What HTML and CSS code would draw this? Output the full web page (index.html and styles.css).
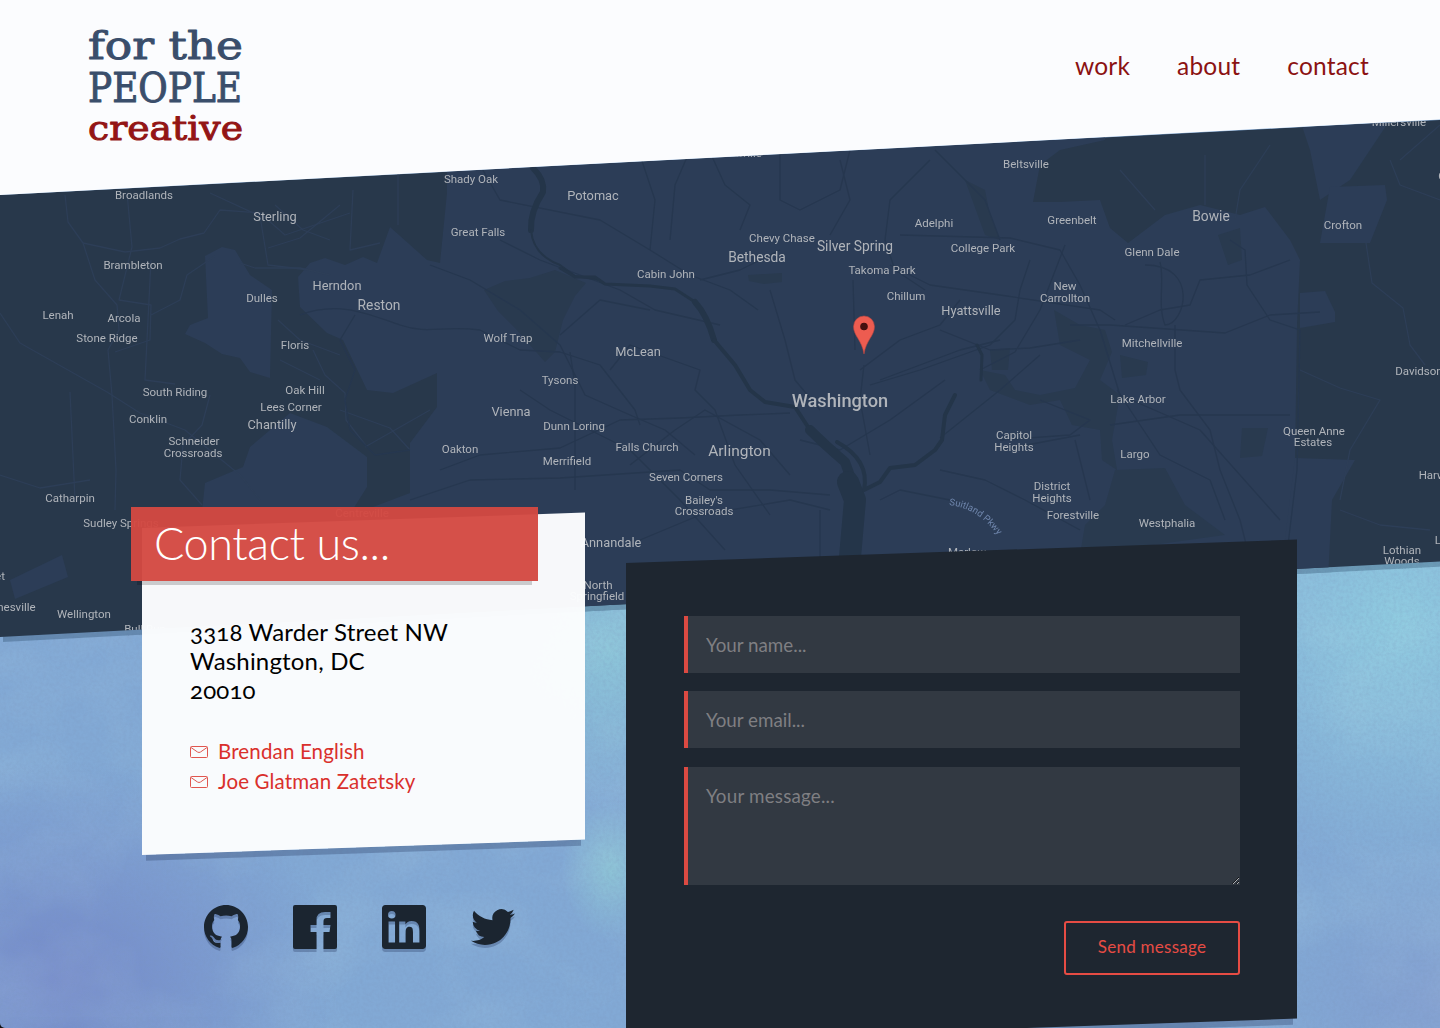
FILE: index.html
```html
<!DOCTYPE html>
<html lang="en">
<head>
<meta charset="utf-8">
<title>Contact | For the People Creative</title>
<link rel="stylesheet" href="styles.css">
</head>
<body>
<div class="page">
  <svg class="paint" viewBox="0 0 1440 478" preserveAspectRatio="none" aria-hidden="true">
    <filter id="wash" x="0" y="0" width="100%" height="100%">
      <feTurbulence type="fractalNoise" baseFrequency="0.008 0.01" numOctaves="4" seed="8"/>
      <feColorMatrix values="0 0 0 0 .55  0 0 0 0 .8  0 0 0 0 .86  1.5 0 0 0 -.6"/>
    </filter>
    <filter id="grain" x="0" y="0" width="100%" height="100%">
      <feTurbulence type="fractalNoise" baseFrequency="0.3" numOctaves="3" seed="3"/>
      <feColorMatrix values="0 0 0 0 .2  0 0 0 0 .3  0 0 0 0 .5  .9 0 0 0 -.3"/>
    </filter>
    <rect width="1440" height="478" filter="url(#wash)" opacity=".22"/>
    <rect width="1440" height="478" filter="url(#grain)" opacity=".45"/>
  </svg>

  <header class="header">
    <a class="logo" href="#" aria-label="for the people creative">
      <svg width="160" height="120" viewBox="0 0 160 120">
        <text class="logo-blue" x="1" y="34" font-size="40" textLength="155" lengthAdjust="spacingAndGlyphs">for the</text>
        <text class="logo-blue" x="1" y="77" font-size="41" textLength="154" lengthAdjust="spacingAndGlyphs">PEOPLE</text>
        <text class="logo-red" x="1" y="115" font-size="34" textLength="155" lengthAdjust="spacingAndGlyphs">creative</text>
      </svg>
    </a>
    <nav class="nav">
      <a href="#">work</a>
      <a href="#">about</a>
      <a href="#">contact</a>
    </nav>
  </header>

  <section class="map-wrap">
    <svg class="map" viewBox="0 120 1440 517" width="1440" height="517">
      <rect class="land" y="120" width="1440" height="517"/>
      <g class="urban">
        <path d="M447 120L447 193L440 263L427 260L390 227L377 263L363 257L345 265L325 258L310 263L298 277L300 307L327 333L343 340L367 390L393 393L437 373L437 407L410 443L410 493L365 510L340 560L340 637H1280L1296 500L1295 460L1297 325L1300 260L1290 240L1265 207L1240 215L1200 205L1165 215L1128 243L1110 228L1100 200L1060 202L1033 202L1040 165L1060 150L1105 140V120Z"/>
        <path d="M205 256L222 247L235 250L250 275L272 290L270 378L250 372L240 358L222 354L205 343L185 334L190 325L208 318Z"/>
        <path d="M250 447L290 413L327 427L367 457L367 487L340 530H200L205 483L243 467Z"/>
        <path d="M1300 120H1390L1350 180L1320 200L1310 150Z"/>
        <path d="M1330 187L1385 185L1387 200L1370 243H1320Z"/>
        <path d="M1300 293L1325 291L1335 312V322L1300 328Z"/>
        <path d="M1295 458L1355 460L1332 500L1328 580H1280Z"/>
        <path d="M10 580L62 555L68 577L15 599Z"/>
      </g>
      <g class="park">
        <path d="M484 290L505 281L530 278L555 270L586 283L575 296L563 320L555 352L545 362L530 345L515 328L498 311Z"/>
        <path d="M748 275L782 273V282L764 284L749 281Z"/>
        <path d="M1054 310L1080 325L1105 330L1112 352L1100 380L1120 395L1112 440L1117 470L1102 460L1100 430L1072 425L1060 400L1030 405L990 390L980 370L1005 375L1015 390L1040 395L1075 388L1090 360L1060 345Z"/>
        <path d="M965 180L985 190L990 215L1000 240L985 235Z"/>
        <path d="M1120 355L1148 362L1146 375L1122 378Z"/>
        <path d="M1242 428H1268L1262 456L1240 458Z"/>
        <path d="M1218 235L1240 228L1242 260L1228 265Z"/>
        <path d="M1115 470L1165 468L1185 505L1225 535L1080 555L1085 525L1105 505Z"/>
        <path d="M990 350L1010 348L1008 370L992 370Z"/>
      </g>
      <g class="roads-light">
        <path d="M65 195L68 222L83 243L95 280L117 305L119 330L108 350L112 395L116 470L115 510"/>
        <path d="M83 243L125 252L160 248L180 239L204 233L220 210L260 213L285 235L350 213"/>
        <path d="M127 193L132 247L119 300L151 305L150 340L115 352"/>
        <path d="M151 260L147 340L145 380L175 384"/>
        <path d="M151 315L180 300L187 275L215 256"/>
        <path d="M0 313L20 343L107 392L140 413L185 430L240 475L260 500"/>
        <path d="M70 392L75 500M202 505L180 480L183 445L202 425L210 395"/>
        <path d="M0 475L40 488L90 480"/>
        <path d="M210 193L260 216L268 265L310 270"/>
        <path d="M268 248L300 238L340 205M275 205L303 230L330 240"/>
        <path d="M353 190L350 250L380 243M398 170V225"/>
        <path d="M240 263L255 268L300 268L330 275"/>
        <path d="M340 410L390 428L410 450M365 447L430 410"/>
        <path d="M313 350L325 375L345 393L346 420L367 447"/>
        <path d="M1366 243L1372 283L1403 308L1410 345L1425 365M1300 370L1340 388L1380 400L1350 450L1340 500"/>
        <path d="M1340 510L1380 525L1430 530M1120 170L1155 210M1205 155V205M1270 145L1240 190L1235 220"/>
        <path d="M1390 160L1400 185L1440 200M1400 160L1440 125"/>
        <path d="M278 320L300 340L340 355M280 360L320 380"/>
      </g>
      <g class="roads-dark">
        <path d="M300 315C340 300 370 315 400 325S440 325 480 330L520 350L560 352L600 365L635 410L640 425"/>
        <path d="M355 315L340 340L355 370L345 400L350 430L375 455L410 450"/>
        <path d="M430 265L470 280L520 310L560 345L585 395L630 415L665 430L695 455"/>
        <path d="M440 470L480 455L560 448L620 420L680 418L740 415L790 413"/>
        <path d="M410 500L470 480L560 478L680 470L710 490L770 490L830 495"/>
        <path d="M500 240L540 260L620 290L655 310L720 325"/>
        <path d="M480 165L500 200L600 220L650 250L690 275L730 290L758 310"/>
        <path d="M640 155L655 200L650 250M690 150L675 185L670 240M710 152L725 185L750 205L740 230"/>
        <path d="M780 150L780 200L800 210L840 190L850 150M840 160L850 200L830 235"/>
        <path d="M930 160L890 200L885 240L895 270L925 290M935 150L985 200L1000 240"/>
        <path d="M770 290L785 340L795 380L820 410M853 280L855 350M880 380L960 350L1000 340"/>
        <path d="M860 370L900 340L940 325L960 300M864 365L860 400L870 455"/>
        <path d="M870 385L920 370L990 345L1015 320L1020 290L1030 260"/>
        <path d="M890 265L930 285L1000 295L1100 310L1115 320"/>
        <path d="M900 235L1010 238L1060 250L1080 285L1100 330L1120 395L1200 430L1280 520"/>
        <path d="M1125 325L1160 310L1190 305L1200 280L1250 275L1290 260"/>
        <path d="M1070 325L1110 325L1225 333L1270 315L1320 312"/>
        <path d="M1145 265C1200 265 1185 325 1165 325C1157 305 1165 280 1160 262"/>
        <path d="M1230 240L1245 250L1247 285L1270 320L1300 330L1297 470L1285 570"/>
        <path d="M1175 325V370L1180 390L1210 430L1220 470L1240 520L1250 560"/>
        <path d="M1110 425L1180 415L1290 415M1117 390L1160 455L1210 480L1225 520"/>
        <path d="M940 330L990 350L1030 348L1080 340M980 370L1015 352L1040 310L1065 245"/>
        <path d="M940 438L1000 390L1040 355M940 470L985 480L1025 500L1080 530"/>
        <path d="M570 352L575 385L575 490M610 370L630 345L700 370L695 390L715 410L735 465L770 515"/>
        <path d="M520 390L550 410L630 450L680 500L725 550M630 465L675 430L705 410L760 440L790 475"/>
        <path d="M700 280L740 270L780 250M800 440L840 450L890 420L945 380M650 310L600 300L560 335"/>
        <path d="M640 540L700 515L790 500L830 510M820 510L820 560M880 500L900 490L950 500"/>
        <path d="M1040 400L1090 420L1070 435L1000 440M1000 450L1080 435M1075 440L1090 500"/>
      </g>
      <g class="water">
        <path stroke-width="6" d="M533 168Q545 180 543 192Q530 212 531 230"/>
        <path stroke-width="2" d="M531 230Q533 255 560 265L575 276L600 280"/>
        <path stroke-width="3" d="M560 268L575 277L595 277L605 284L650 286L675 289L695 302"/>
        <path stroke-width="6" d="M695 302Q707 315 714 340"/>
        <path stroke-width="4" d="M714 340L735 365L750 390L765 402L795 407L810 430"/>
        <path stroke-width="10" d="M810 430Q825 445 845 462L855 490L850 530L848 570"/>
        <path stroke-width="22" d="M848 482L855 500L848 580"/>
        <path stroke-width="4" d="M837 442Q870 460 864 490L880 482L890 468L915 465L935 450L942 440L945 415L955 395"/>
        <path stroke-width="3" d="M977 345L982 355L981 380"/>
      </g>
      <g class="label">
        <text x="144" y="199">Broadlands</text><text x="133" y="269">Brambleton</text><text x="58" y="319">Lenah</text>
        <text x="124" y="322">Arcola</text><text x="107" y="342">Stone Ridge</text><text x="262" y="302">Dulles</text>
        <text x="295" y="349">Floris</text><text x="175" y="396">South Riding</text><text x="148" y="423">Conklin</text>
        <text x="194" y="445">Schneider</text><text x="193" y="457">Crossroads</text><text x="305" y="394">Oak Hill</text>
        <text x="291" y="411">Lees Corner</text><text x="70" y="502">Catharpin</text><text x="121" y="527">Sudley Springs</text>
        <text x="84" y="618">Wellington</text><text x="0" y="580">et</text><text x="8" y="611">Gainesville</text><text x="145" y="633">Bull Run</text>
        <text x="471" y="183">Shady Oak</text><text x="478" y="236">Great Falls</text><text x="508" y="342">Wolf Trap</text>
        <text x="560" y="384">Tysons</text><text x="574" y="430">Dunn Loring</text><text x="567" y="465">Merrifield</text>
        <text x="460" y="453">Oakton</text><text x="666" y="278">Cabin John</text><text x="782" y="242">Chevy Chase</text>
        <text x="647" y="451">Falls Church</text><text x="686" y="481">Seven Corners</text><text x="704" y="504">Bailey's</text>
        <text x="704" y="515">Crossroads</text><text x="598" y="589">North</text><text x="597" y="600">Springfield</text>
        <text x="934" y="227">Adelphi</text><text x="983" y="252">College Park</text><text x="882" y="274">Takoma Park</text>
        <text x="906" y="300">Chillum</text><text x="1026" y="168">Beltsville</text><text x="1072" y="224">Greenbelt</text>
        <text x="1152" y="256">Glenn Dale</text><text x="1065" y="290">New</text><text x="1065" y="302">Carrollton</text>
        <text x="1152" y="347">Mitchellville</text><text x="1138" y="403">Lake Arbor</text><text x="1135" y="458">Largo</text>
        <text x="1014" y="439">Capitol</text><text x="1014" y="451">Heights</text><text x="1052" y="490">District</text>
        <text x="1052" y="502">Heights</text><text x="1073" y="519">Forestville</text><text x="1167" y="527">Westphalia</text>
        <text x="1343" y="229">Crofton</text><text x="1399" y="126">Millersville</text><text x="1314" y="435">Queen Anne</text>
        <text x="1313" y="446">Estates</text><text x="1429" y="375">Davidsonville</text><text x="1442" y="479">Harwood</text>
        <text x="1402" y="554">Lothian</text><text x="1402" y="565">Woods</text><text x="1447" y="544">Lake</text>
        <text x="967" y="556">Marlow</text><text x="362" y="517">Centreville</text><text x="1460" y="180">Odenton</text><text x="739" y="157">Rockville</text>
      </g>
      <g class="label label-town">
        <text x="275" y="221">Sterling</text><text x="337" y="290">Herndon</text><text x="272" y="429">Chantilly</text>
        <text x="593" y="200">Potomac</text><text x="638" y="356">McLean</text><text x="511" y="416">Vienna</text>
        <text x="971" y="315">Hyattsville</text><text x="611" y="547">Annandale</text>
      </g>
      <g class="label label-mid">
        <text x="379" y="310">Reston</text><text x="757" y="262">Bethesda</text><text x="855" y="251">Silver Spring</text><text x="1211" y="221">Bowie</text>
      </g>
      <text class="label label-large" x="739.500" y="456">Arlington</text>
      <text class="label label-city" x="840" y="407">Washington</text>
      <path id="pkwy" d="M949 505Q978 508 999 537" fill="none"/>
      <text class="label-road"><textPath href="#pkwy">Suitland Pkwy</textPath></text>
      <path d="M864 354C862 340 853.500 336 853.500 326.500A10.500 10.500 0 0 1 874.500 326.500C874.500 336 866 340 864 354Z" fill="#ed5c50" stroke="#b94742" stroke-width=".6"/>
      <circle cx="864" cy="326.500" r="3.800" fill="#44100f"/>
    </svg>
  </section>

  <main class="main">
    <section class="contact">
      <h1 class="title">Contact us...</h1>
      <address class="address">3318 Warder Street NW<br>Washington, DC<br>20010</address>
      <ul class="people">
        <li><svg width="18" height="12" viewBox="0 0 18 12"><path d="M.5 1.500Q.5.500 1.500.500H16.500Q17.500.500 17.500 1.500V10.500Q17.500 11.500 16.500 11.500H1.500Q.5 11.500.500 10.500ZM1 1.500L7.500 6Q9 7 10.500 6L17 1.500"/></svg><a href="#">Brendan English</a></li>
        <li><svg width="18" height="12" viewBox="0 0 18 12"><path d="M.5 1.500Q.5.500 1.500.500H16.500Q17.500.500 17.500 1.500V10.500Q17.500 11.500 16.500 11.500H1.500Q.5 11.500.500 10.500ZM1 1.500L7.500 6Q9 7 10.500 6L17 1.500"/></svg><a href="#">Joe Glatman Zatetsky</a></li>
      </ul>
      <div class="social">
        <a href="#" aria-label="GitHub"><svg width="44" height="44" viewBox="0 0 16 16"><path d="M8 0C3.580 0 0 3.580 0 8c0 3.540 2.290 6.530 5.470 7.590.4.070.55-.17.55-.38 0-.19-.01-.82-.01-1.490-2.010.37-2.530-.49-2.690-.94-.09-.23-.48-.94-.82-1.130-.28-.15-.68-.52-.01-.53.63-.01 1.080.58 1.230.82.72 1.210 1.870.87 2.330.66.07-.52.28-.87.51-1.070-1.780-.2-3.640-.89-3.640-3.950 0-.87.31-1.590.82-2.150-.08-.2-.36-1.020.08-2.120 0 0 .67-.21 2.200.82.64-.18 1.320-.27 2-.27s1.360.09 2 .27c1.530-1.040 2.200-.82 2.200-.82.44 1.100.16 1.920.08 2.120.51.56.82 1.270.82 2.150 0 3.070-1.870 3.750-3.650 3.950.29.25.54.73.54 1.480 0 1.070-.01 1.930-.01 2.200 0 .21.15.46.55.38A8.010 8.010 0 0 0 16 8c0-4.420-3.580-8-8-8z"/></svg></a>
        <a href="#" aria-label="Facebook"><svg width="44" height="44" viewBox="0 0 44 44"><path d="M2 0H42Q44 0 44 2V42Q44 44 42 44H30.500V27H36.500L37.500 20H30.500V16Q30.500 13 34 13H37.500V7H32Q23.500 7 23.500 15V20H17.500V27H23.500V44H2Q0 44 0 42V2Q0 0 2 0Z"/></svg></a>
        <a href="#" aria-label="LinkedIn"><svg width="44" height="44" viewBox="0 0 24 24"><path d="M22.220 0H1.770C.79 0 0 .77 0 1.730v20.540C0 23.230.79 24 1.770 24h20.450c.98 0 1.780-.77 1.780-1.730V1.730C24 .77 23.200 0 22.220 0zM7.120 20.450H3.560V9h3.560v11.450zM5.340 7.430a2.060 2.060 0 1 1 0-4.130 2.060 2.060 0 0 1 0 4.130zM20.450 20.450h-3.560v-5.570c0-1.330-.02-3.040-1.850-3.040-1.850 0-2.140 1.450-2.140 2.940v5.670H9.350V9h3.410v1.560h.05c.48-.9 1.640-1.850 3.370-1.850 3.600 0 4.270 2.370 4.270 5.460v6.280z"/></svg></a>
        <a href="#" aria-label="Twitter"><svg width="44" height="44" viewBox="0 0 24 24"><path d="M23.953 4.570a10 10 0 0 1-2.825.775 4.958 4.958 0 0 0 2.163-2.723c-.951.555-2.005.959-3.127 1.184a4.920 4.920 0 0 0-8.384 4.482C7.690 8.095 4.067 6.130 1.640 3.162a4.822 4.822 0 0 0-.666 2.475c0 1.710.87 3.213 2.188 4.096a4.904 4.904 0 0 1-2.228-.616v.06a4.923 4.923 0 0 0 3.946 4.827 4.996 4.996 0 0 1-2.212.085 4.936 4.936 0 0 0 4.604 3.417 9.867 9.867 0 0 1-6.102 2.105c-.39 0-.779-.023-1.170-.067a13.995 13.995 0 0 0 7.557 2.209c9.053 0 13.998-7.496 13.998-13.985 0-.21 0-.42-.015-.63A9.935 9.935 0 0 0 24 4.590z"/></svg></a>
      </div>
    </section>
    <form class="form">
      <input type="text" placeholder="Your name..." aria-label="Your name">
      <input type="email" placeholder="Your email..." aria-label="Your email">
      <textarea placeholder="Your message..." aria-label="Your message"></textarea>
      <button type="button">Send message</button>
    </form>
  </main>
</div>
</body>
</html>
```
FILE: styles.css
```css
* { box-sizing: border-box; }
html { background: #111; }
body { margin: 0; font-family: Lato, "Open Sans", sans-serif; }
a { color: inherit; text-decoration: none; }

.page {
  position: relative;
  height: 1028px;
  overflow: hidden;
  border-bottom-left-radius: 5px;
  background:
    radial-gradient(ellipse 130px 160px at 610px 650px, #8cc5d9 0%, transparent 100%),
    radial-gradient(ellipse 50px 70px at 612px 870px, #8dc3d6 0%, transparent 100%),
    radial-gradient(ellipse 280px 220px at 60px 980px, #7489c9 0%, transparent 100%),
    radial-gradient(ellipse 260px 250px at 1400px 620px, #8fcbe0 0%, transparent 100%),
    radial-gradient(ellipse 180px 130px at 1440px 1000px, #829ed0 0%, transparent 100%),
    #82a9d5;
}
.paint { position: absolute; left: 0; bottom: 0; width: 1440px; height: 478px; }

.header {
  position: relative;
  z-index: 2;
  display: flex;
  justify-content: space-between;
  align-items: flex-start;
  height: 195px;
  padding: 25px 71px 0 87px;
  background: #fbfcfe;
  clip-path: polygon(0 0, 100% 0, 100% 119.500px, 0 195px);
}
.logo svg { display: block; overflow: visible; }
.logo text { font-family: "DejaVu Serif", serif; stroke-width: 1px; stroke-linejoin: round; }
.logo-blue { fill: #3a4e6b; stroke: #3a4e6b; }
.logo-red { fill: #931515; stroke: #931515; }
.nav { display: flex; gap: 47px; padding-top: 26px; color: #8b1212; font-size: 24.500px; line-height: 30px; letter-spacing: .2px; }

.map-wrap { position: relative; margin-top: -75px; height: 517px; filter: drop-shadow(3px 5px 0 rgba(30, 60, 90, .3)); }
.map { display: block; clip-path: polygon(0 75px, 100% 0, 100% 441.500px, 0 517px); }
.land { fill: #28384b; }
.urban { fill: #2c3d57; }
.park { fill: #293a4f; }
.roads-light, .roads-dark { fill: none; stroke-width: 1.300; stroke-linejoin: round; }
.roads-light { stroke: #2d3e57; }
.roads-dark { stroke: #26374f; }
.water { fill: none; stroke: #243549; stroke-linejoin: round; stroke-linecap: round; }
.label { fill: #b0b4ba; font: 11.500px Roboto, sans-serif; text-anchor: middle; }
.label-town { font-size: 12.800px; }
.label-mid { font-size: 13.800px; }
.label-large { font-size: 15.500px; }
.label-city { font-size: 18.200px; font-weight: 500; }
.label-road { fill: #6f86ac; font: 9.500px Roboto, sans-serif; }

.main { position: relative; display: flex; gap: 41px; margin-top: -130px; padding-left: 142px; }
.contact { position: relative; z-index: 0; width: 443px; }
.contact::before {
  content: "";
  position: absolute;
  z-index: -1;
  inset: 21px 0 auto;
  height: 327px;
  background: rgba(252, 253, 254, .975);
  box-shadow: 0 10px 0 -4px rgba(50, 70, 110, .35);
  transform: skewY(-2deg);
  transform-origin: 0 0;
}
.title {
  width: 407px;
  height: 74px;
  margin: 0 0 0 -11px;
  padding-left: 23px;
  background: rgba(211, 73, 66, .96);
  box-shadow: 0 10px 0 -6px rgba(0, 0, 0, .18);
  color: #fff;
  font-size: 45px;
  font-weight: 300;
  line-height: 73px;
  letter-spacing: -.4px;
}
.address { margin: 36px 48px 0; font-size: 24px; font-style: normal; line-height: 29px; letter-spacing: .18px; font-variant-numeric: oldstyle-nums; }
.people { margin: 32px 48px 0; padding: 0; list-style: none; color: #d9302c; font-size: 20.500px; line-height: 30px; letter-spacing: .15px; }
.people li { display: flex; align-items: center; gap: 10px; }
.people svg { position: relative; top: 1px; fill: none; stroke: #e0564f; stroke-width: 1; }
.social { display: flex; gap: 45px; margin: 109px 0 0 62px; }
.social svg { display: block; fill: #1b2530; filter: drop-shadow(0 3px 0 rgba(50, 70, 110, .35)); }

.form {
  position: relative;
  z-index: 0;
  display: flex;
  flex-direction: column;
  gap: 18px;
  width: 671px;
  height: 479px;
  margin-top: 56px;
  padding: 53px 57px 0 58px;
}
.form::before {
  content: "";
  position: absolute;
  z-index: -1;
  inset: 0;
  background: #1e2630;
  box-shadow: 0 10px 0 -4px rgba(50, 70, 110, .35);
  transform: skewY(-2deg);
  transform-origin: 0 0;
}
input, textarea {
  height: 57px;
  margin: 0;
  padding: 0 18px;
  border: 0;
  border-left: 4px solid #dc4a42;
  border-radius: 0;
  background: #323942;
  color: #ddd;
  font: 18.800px Lato, sans-serif;
}
textarea { height: 118px; margin-top: 1px; padding-top: 17px; letter-spacing: .2px; resize: vertical; }
::placeholder { color: #7f7f82; opacity: 1; }
button {
  align-self: flex-end;
  width: 176px;
  height: 54px;
  margin-top: 18px;
  padding: 0 0 4px;
  border: 2px solid #e64c44;
  border-radius: 3px;
  background: none;
  color: #e64c44;
  font: 17px Lato, sans-serif;
  letter-spacing: .25px;
}
```
